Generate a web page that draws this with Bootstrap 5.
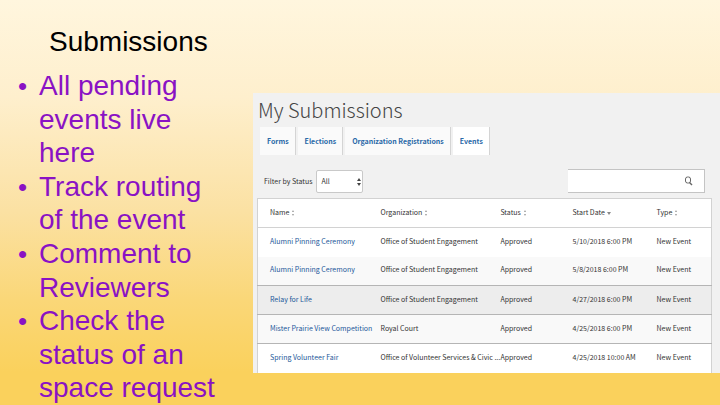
<!DOCTYPE html>
<html lang="en">
<head>
<meta charset="utf-8">
<meta name="viewport" content="width=device-width, initial-scale=1">
<title>Submissions</title>
<link href="https://cdn.jsdelivr.net/npm/bootstrap@5.3.0/dist/css/bootstrap.min.css" rel="stylesheet">
<style>
body {
  font-family: "Liberation Sans", Arial, sans-serif;
  background: linear-gradient(#fff6de 0%, #feefcd 24%, #fbe1a3 52%, #fad778 74%, #fad15c 92%, #fad15c 100%) no-repeat #fad15c;
  min-height: 100vh;
  overflow: hidden;
}
.slide { display: grid; grid-template-columns: 253fr 467fr; align-items: start; }
.slide-title { font-size: 28px; line-height: 34px; padding: 25px 0 10px 49px; color: #000; font-weight: 400; }
.points { font-size: 28px; line-height: 1.2; color: #8a12c4; padding-left: 39px; padding-right: 30px; list-style: none; }
.points li::before { content: "•"; float: left; font-size: 26px; line-height: 34px; margin-left: -21px; }
.panel { margin-top: 93px; background: #f1f1f1; font-family: "Noto Sans CJK SC", "Noto Sans", sans-serif; font-size: 7px; line-height: 12px; color: #333; padding: 0 8px 0 4px; }
.panel-title { font-size: 20px; line-height: 34px; font-weight: 300; color: #444; padding-left: 1px; }
.tabs { gap: 2px; padding-left: 3px; }
.tabs .nav-link { font-size: 7px; line-height: 12px; font-weight: 700; color: #2a69a8; background: #fafafa; border-right: 1px solid #d4d4d4; border-radius: 0; padding: 8px 6px 8px 7px; white-space: nowrap; }
.tabs .nav-link.active { background: #fff; color: #2a69a8; }
.filters { padding: 14px 7px 5px 7px; }
.status-box { width: 47px; height: 23px; margin-left: 4px; }
.status-box select { appearance: none; width: 100%; height: 100%; font-size: 7px; color: #333; background: #fff; border: 1px solid #c9c9c9; border-radius: 2px; padding: 0 4px; }
.status-box svg { position: absolute; right: 2px; top: 8px; pointer-events: none; }
.search { width: 137px; height: 24px; background: #fff; border: solid #c4c4c4; border-width: 1px 1px 1px 0; }
.search input { font-size: 7px; min-width: 0; outline: 0; }
.search button { width: 32px; line-height: 0; }
.events { table-layout: fixed; width: 100%; background: #fff; border: solid #d2d2d2; border-width: 1px 1px 0; }
.events th, .events td { height: 29px; padding: 0 0 3px; font-weight: 400; white-space: nowrap; vertical-align: middle; }
.events th:first-child, .events td:first-child { padding-left: 12px; }
.events tr { border-bottom: 1px solid #d2d2d2; }
.events tbody tr:nth-child(1), .events tbody tr:last-child { border-bottom: 0; }
.events tbody tr:nth-child(n+2) { border-bottom-color: #b5b5b5; }
.events tbody tr:nth-child(even) { background: #f9f9f9; }
.events tbody tr.picked { background: #ededed; }
.events a { color: #1c5799; }
.events svg { margin-left: 2px; vertical-align: middle; }
.c1 { width: 27.1%; } .c2 { width: 26.4%; } .c3 { width: 15.9%; } .c4 { width: 18.5%; } .c5 { width: 12.1%; }
</style>
<script src="https://cdn.jsdelivr.net/npm/bootstrap@5.3.0/dist/js/bootstrap.bundle.min.js"></script>
</head>
<body>
<svg class="d-none" aria-hidden="true">
  <symbol id="sort" viewBox="0 0 4 6"><path d="M1 2h2L2 0zM1 4h2L2 6z" fill="#999"/></symbol>
  <symbol id="down" viewBox="0 0 4 6"><path d="M0 2h4L2 5z" fill="#888"/></symbol>
</svg>
<main class="slide">
  <section>
    <h1 class="slide-title m-0">Submissions</h1>
    <ul class="points m-0">
      <li>All pending events live here</li>
      <li>Track routing of the event</li>
      <li>Comment to Reviewers</li>
      <li>Check the status of an space request</li>
    </ul>
  </section>
  <section class="panel">
    <h2 class="panel-title m-0">My Submissions</h2>
    <nav class="nav tabs flex-nowrap">
      <a class="nav-link" href="#">Forms</a>
      <a class="nav-link" href="#">Elections</a>
      <a class="nav-link" href="#">Organization Registrations</a>
      <a class="nav-link active" aria-current="page" href="#">Events</a>
    </nav>
    <form class="filters d-flex align-items-center">
      <label for="status">Filter by Status</label>
      <div class="status-box position-relative">
        <select id="status"><option>All</option></select>
        <svg width="4" height="8" viewBox="0 0 4 8" aria-hidden="true"><path d="M0 3h4L2 0zM0 5h4L2 8z" fill="#444"/></svg>
      </div>
      <div class="search d-flex ms-auto">
        <input class="border-0 bg-transparent flex-grow-1" type="search" aria-label="Search submissions">
        <button class="border-0 bg-transparent p-0" type="submit" aria-label="Search">
          <svg width="9" height="10" viewBox="0 0 9 10" fill="none" stroke="#666"><rect x="1.5" y="1" width="5" height="6" rx="2"/><path d="M5.5 6.5L8 9" stroke-width="1.4"/></svg>
        </button>
      </div>
    </form>
    <table class="events">
      <colgroup><col class="c1"><col class="c2"><col class="c3"><col class="c4"><col class="c5"></colgroup>
      <thead>
        <tr>
          <th scope="col">Name<svg width="4" height="6"><use href="#sort"/></svg></th>
          <th scope="col">Organization<svg width="4" height="6"><use href="#sort"/></svg></th>
          <th scope="col">Status<svg width="4" height="6"><use href="#sort"/></svg></th>
          <th scope="col">Start Date<svg width="4" height="6"><use href="#down"/></svg></th>
          <th scope="col">Type<svg width="4" height="6"><use href="#sort"/></svg></th>
        </tr>
      </thead>
      <tbody>
        <tr><td><a class="text-decoration-none" href="#">Alumni Pinning Ceremony</a></td><td>Office of Student Engagement</td><td>Approved</td><td>5/10/2018 6:00 PM</td><td>New Event</td></tr>
        <tr><td><a class="text-decoration-none" href="#">Alumni Pinning Ceremony</a></td><td>Office of Student Engagement</td><td>Approved</td><td>5/8/2018 6:00 PM</td><td>New Event</td></tr>
        <tr class="picked"><td><a class="text-decoration-none" href="#">Relay for Life</a></td><td>Office of Student Engagement</td><td>Approved</td><td>4/27/2018 6:00 PM</td><td>New Event</td></tr>
        <tr><td><a class="text-decoration-none" href="#">Mister Prairie View Competition</a></td><td>Royal Court</td><td>Approved</td><td>4/25/2018 6:00 PM</td><td>New Event</td></tr>
        <tr><td><a class="text-decoration-none" href="#">Spring Volunteer Fair</a></td><td>Office of Volunteer Services &amp; Civic ...</td><td>Approved</td><td>4/25/2018 10:00 AM</td><td>New Event</td></tr>
      </tbody>
    </table>
  </section>
</main>
</body>
</html>
